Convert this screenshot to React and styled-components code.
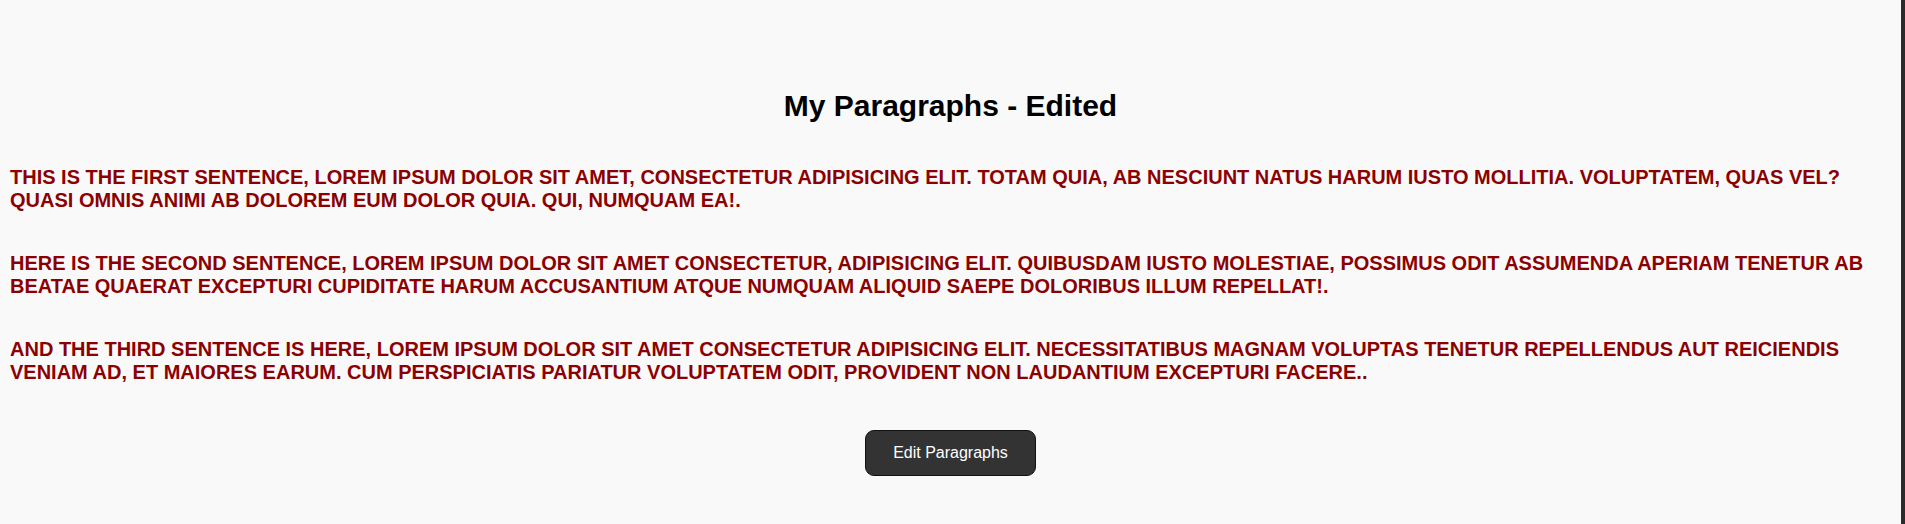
import React from "react";
import styled, { createGlobalStyle } from "styled-components";

const GlobalStyle = createGlobalStyle`
  html, body {
    margin: 0;
    padding: 0;
    background: #2b2b2b;
  }
  body {
    font-family: "Liberation Sans", Arial, sans-serif;
  }
`;

const Page = styled.main`
  min-height: 524px;
  box-sizing: border-box;
  margin-right: 4px;
  background: #f9f9f9;
  padding: 89px 10px 40px;
  display: flex;
  flex-direction: column;
  align-items: center;
`;

const Title = styled.h1`
  margin: 0 0 43px;
  font-size: 30px;
  font-weight: bold;
  color: #000;
  text-align: center;
`;

const Paragraph = styled.p`
  align-self: stretch;
  margin: 0 0 40px;
  font-size: 20px;
  line-height: 23px;
  font-weight: bold;
  text-transform: uppercase;
  color: #8b0000;
`;

const Button = styled.button`
  margin-top: 6px;
  padding: 13px 27px;
  font-family: "Liberation Sans", Arial, sans-serif;
  font-size: 16px;
  color: #fff;
  background: #333;
  border: 1px solid #111;
  border-radius: 9px;
  cursor: pointer;
`;

const paragraphs = [
  "This is the first sentence, Lorem ipsum dolor sit amet, consectetur adipisicing elit. Totam quia, ab nesciunt natus harum iusto mollitia. Voluptatem, quas vel? Quasi omnis animi ab dolorem eum dolor quia. Qui, numquam ea!.",
  "Here is the second sentence, Lorem ipsum dolor sit amet consectetur, adipisicing elit. Quibusdam iusto molestiae, possimus odit assumenda aperiam tenetur ab beatae quaerat excepturi cupiditate harum accusantium atque numquam aliquid saepe doloribus illum repellat!.",
  "And the third sentence is here, Lorem ipsum dolor sit amet consectetur adipisicing elit. Necessitatibus magnam voluptas tenetur repellendus aut reiciendis veniam ad, et maiores earum. Cum perspiciatis pariatur voluptatem odit, provident non laudantium excepturi facere..",
];

export default function App() {
  return (
    <>
      <GlobalStyle />
      <Page>
        <Title>My Paragraphs - Edited</Title>
        {paragraphs.map((text, i) => (
          <Paragraph key={i}>{text}</Paragraph>
        ))}
        <Button type="button">Edit Paragraphs</Button>
      </Page>
    </>
  );
}
